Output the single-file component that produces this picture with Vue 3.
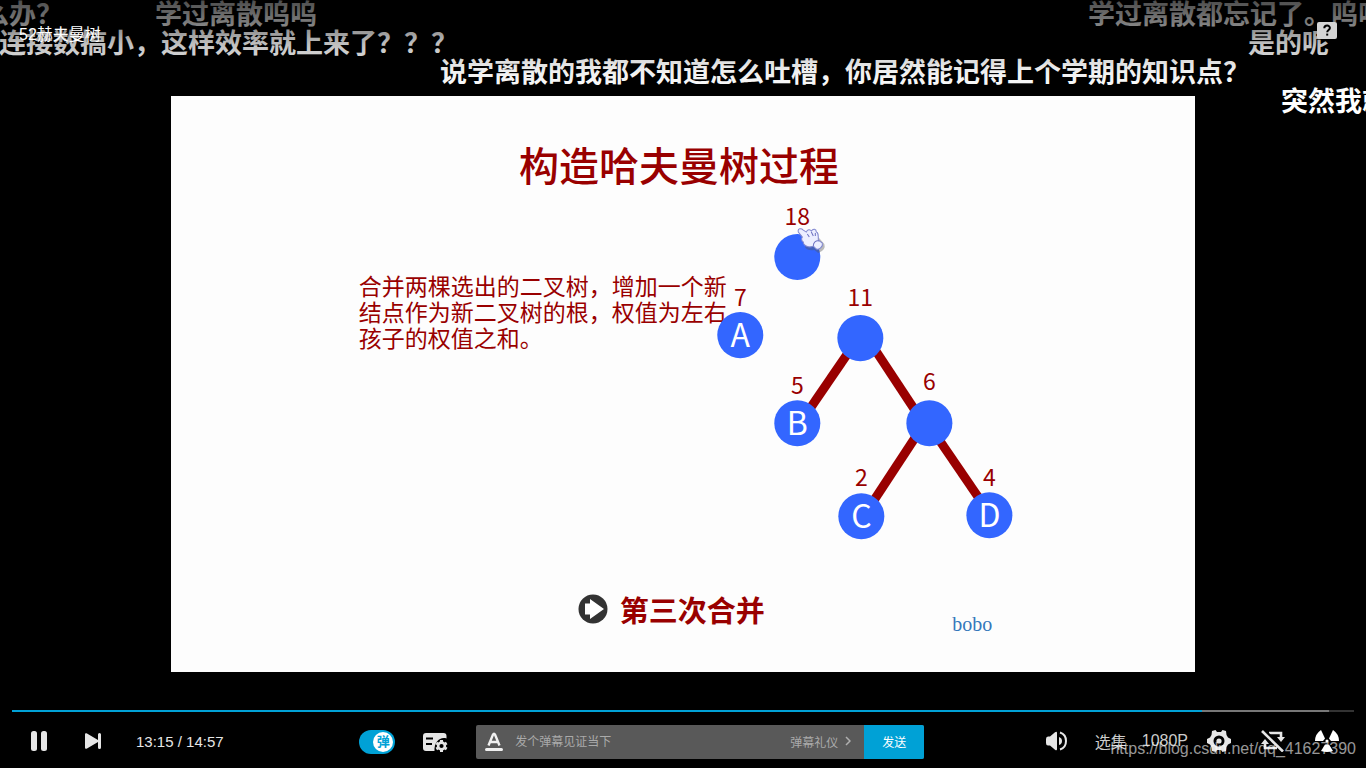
<template>
    <div class="player">
        <header class="top-bar">
            <h1>52赫夫曼树</h1>
            <button class="help" aria-label="帮助">
                <svg width="20" height="17" viewBox="0 0 20 17">
                    <rect width="20" height="17" rx="2" fill="#d4d4d4" />
                    <path
                        d="M7.3 6.2C7.3 2.7 13 2.8 12.9 6C12.8 8 10.2 8 10.2 10.2"
                        fill="none"
                        stroke="#000"
                        stroke-width="2"
                    />
                    <rect x="9.2" y="11.6" width="2" height="2" />
                </svg>
            </button>
        </header>

        <main class="slide">
            <h2>构造哈夫曼树过程</h2>
            <p class="explain">
                合并两棵选出的二叉树，增加一个新<br />
                结点作为新二叉树的根，权值为左右<br />
                孩子的权值之和。
            </p>
            <svg class="tree" viewBox="0 0 1024 576">
                <line
                    v-for="(edge, i) in edges"
                    :key="i"
                    :x1="edge[0]"
                    :y1="edge[1]"
                    :x2="edge[2]"
                    :y2="edge[3]"
                />
                <g v-for="node in nodes" :key="node.weight">
                    <circle :cx="node.x" :cy="node.y" r="23" />
                    <text class="weight" :x="node.x" :y="node.labelY">
                        {{ node.weight }}
                    </text>
                    <text class="name" :x="node.x" :y="node.y + 12">
                        {{ node.name }}
                    </text>
                </g>
                <!-- puntero con forma de mano -->
                <g transform="translate(626 132)">
                    <path
                        d="M7 14L19 6L26 14Q28 20 20 23L16 20Q10 21 7 18Z"
                        fill="#555"
                        opacity="0.4"
                        transform="translate(1 2)"
                    />
                    <path
                        d="M1 4C0 0 4 0 6 2L9 4C10 1 13 1 14 3C16 0 19 1 19 4C21 4 21 7 21 12L25 15C26 18 22 22 19 21L16 18C12 20 6 18 6 14C4 13 4 10 5 9Z"
                        fill="#eceeff"
                        stroke="#8087cf"
                        stroke-width="1"
                    />
                    <path
                        d="M10 6L12 9M14 4L16 8M18 5L18 8M16 18C16 14 19 12 22 13"
                        fill="none"
                        stroke="#6c70c0"
                        stroke-width="1"
                    />
                </g>
            </svg>
            <div class="step">
                <svg width="30" height="30" viewBox="0 0 30 30">
                    <circle cx="15" cy="15" r="14.5" fill="#333" />
                    <path d="M7 9.5H12V5L26 15L12 25V20.5H7Z" fill="#fff" />
                </svg>
                <strong>第三次合并</strong>
                <span class="author">bobo</span>
            </div>
        </main>

        <footer class="controls">
            <div class="progress">
                <div class="buffered" :style="{ width: buffered + '%' }"></div>
                <div class="played" :style="{ width: played + '%' }"></div>
            </div>
            <div class="row">
                <div class="left">
                    <button
                        class="icon"
                        aria-label="暂停"
                        @click="paused = !paused"
                    >
                        <svg width="18" height="22" viewBox="0 0 18 22">
                            <path v-if="paused" d="M2 1L17 11L2 21Z" />
                            <g v-else>
                                <rect x="1" y="1" width="6" height="20" rx="2.5" />
                                <rect x="11" y="1" width="6" height="20" rx="2.5" />
                            </g>
                        </svg>
                    </button>
                    <button class="icon" aria-label="下一个">
                        <svg width="16" height="16" viewBox="0 0 16 16">
                            <path
                                d="M0 1.5C0 0 1.2 0 2 .5L13 7V1.5Q13 0 14.5 0T16 1.5V14.5Q16 16 14.5 16T13 14.5V9L2 15.5C1.2 16 0 16 0 14.5Z"
                            />
                        </svg>
                    </button>
                    <span class="time">13:15 / 14:57</span>
                </div>

                <div class="center">
                    <label class="toggle">
                        <input v-model="showDanmaku" type="checkbox" aria-label="弹幕" />
                        <span>弹</span>
                    </label>
                    <button class="settings" aria-label="弹幕设置">
                        <svg width="25" height="20" viewBox="0 0 25 20">
                            <path
                                d="M3 1H20.5Q23.5 1 23.5 4V6.5C17 4.5 11 10 11.5 19H3Q0 19 0 16V4Q0 1 3 1Z"
                            />
                            <path
                                d="M3 6.5H10M3 12H9"
                                stroke="#000"
                                stroke-width="2"
                            />
                            <circle
                                cx="18.5"
                                cy="14"
                                r="3.4"
                                fill="none"
                                stroke="#e6e6e6"
                                stroke-width="2.6"
                            />
                            <path
                                d="M18.5 8V10M18.5 18V20M13.3 11L15 12M22 16L23.7 17M13.3 17L15 16M22 12L23.7 11"
                                stroke="#e6e6e6"
                                stroke-width="3"
                            />
                        </svg>
                    </button>
                    <form class="send-bar" @submit.prevent="message = ''">
                        <button type="button" class="font" aria-label="字体">
                            <svg width="18" height="20" viewBox="0 0 18 20">
                                <path
                                    d="M3.5 13.5L8 2.5Q9 .7 10 2.5L14.5 13.5M5.5 10H12.5"
                                    fill="none"
                                    stroke="#f0f0f0"
                                    stroke-width="2.4"
                                />
                                <rect y="16" width="18" height="3" rx="1.5" fill="#f0f0f0" />
                            </svg>
                        </button>
                        <input
                            v-model="message"
                            type="text"
                            aria-label="弹幕"
                            placeholder="发个弹幕见证当下"
                        />
                        <a href="#" class="etiquette">
                            弹幕礼仪
                            <svg width="6" height="10" viewBox="0 0 6 10">
                                <path
                                    d="M1 1L5 5L1 9"
                                    fill="none"
                                    stroke="#b0b0b0"
                                    stroke-width="1.5"
                                />
                            </svg>
                        </a>
                        <button type="submit" class="send">发送</button>
                    </form>
                </div>

                <div class="right">
                    <button class="icon" aria-label="音量">
                        <svg width="22" height="20" viewBox="0 0 22 20">
                            <path
                                d="M2 5.5H4L9 1.3Q11 0 11 2V18Q11 20 9 18.7L4 14.5H2Q0 14.5 0 12V8Q0 5.5 2 5.5Z"
                            />
                            <path d="M13 6Q16 7 16 10T13 14Z" />
                            <path
                                d="M14 1.5C22 4 22 16 14 18.5"
                                fill="none"
                                stroke="#e6e6e6"
                                stroke-width="2"
                            />
                        </svg>
                    </button>
                    <button class="text">选集</button>
                    <button class="text">1080P</button>
                    <button class="icon" aria-label="设置">
                        <svg width="24" height="22" viewBox="0 0 24 22">
                            <path
                                fill-rule="evenodd"
                                d="M5 1L8.5 0L10 2H14L15.5 0L19 1L19.5 5L21 7.5L24 9V13L21 14.5L19.5 17L19 21L15.5 22L14 20H10L8.5 22L5 21L4.5 17L3 14.5L0 13V9L3 7.5L4.5 5ZM12 5.5A5.5 5.5 0 1 0 12 16.5A5.5 5.5 0 1 0 12 5.5Z"
                            />
                            <circle cx="12" cy="11" r="2.6" />
                        </svg>
                    </button>
                    <button class="icon" aria-label="洗脑循环">
                        <svg width="24" height="22" viewBox="0 0 24 22">
                            <path
                                d="M8 3H20V8M16 18H4V12"
                                fill="none"
                                stroke="#e6e6e6"
                                stroke-width="2.6"
                            />
                            <path d="M16 7H24L20 12ZM0 14L4 9L8 14Z" />
                            <path d="M4 1L24 21" stroke="#000" stroke-width="3" />
                            <path d="M1 1L22 21.5" stroke="#e6e6e6" stroke-width="2.6" />
                        </svg>
                    </button>
                    <button class="icon" aria-label="宽屏">
                        <svg width="24" height="22" viewBox="0 0 24 22">
                            <g fill="#fff">
                                <path d="M0 11Q0 4 6 0L10 8.5L8 11Z" />
                                <path d="M24 11Q24 4 18 0L14 8.5L16 11Z" />
                                <path d="M10 14.5H14L18 21Q12 23 6 21Z" />
                                <circle cx="12" cy="11" r="1.6" />
                            </g>
                        </svg>
                    </button>
                </div>
            </div>
        </footer>

        <div v-show="showDanmaku" class="danmaku">
            <span
                v-for="item in danmaku"
                :key="item.text"
                :style="{ left: item.left + 'px', top: item.row * 29 + 'px' }"
                >{{ item.text }}</span
            >
        </div>
        <span class="watermark">https://blog.csdn.net/qq_41627390</span>
    </div>
</template>

<script setup>
import { ref } from "vue";

const paused = ref(false);
const showDanmaku = ref(true);
const message = ref("");
const played = ref(88.7);
const buffered = ref(98.1);

const nodes = [
    { weight: 18, name: "", x: 626, y: 161, labelY: 129 },
    { weight: 7, name: "A", x: 569, y: 239, labelY: 210 },
    { weight: 11, name: "", x: 689, y: 242, labelY: 210 },
    { weight: 5, name: "B", x: 626, y: 327, labelY: 298 },
    { weight: 6, name: "", x: 758, y: 327, labelY: 294 },
    { weight: 2, name: "C", x: 690, y: 420, labelY: 390 },
    { weight: 4, name: "D", x: 818, y: 419, labelY: 390 },
];

// x1, y1, x2, y2
const edges = [
    [678, 255, 639, 312],
    [704, 254, 743, 313],
    [746, 338, 702, 405],
    [766, 341, 809, 404],
];

const danmaku = [
    { text: "么办？", left: -18, row: 0 },
    { text: "学过离散呜呜", left: 155, row: 0 },
    { text: "学过离散都忘记了。呜呜", left: 1088, row: 0 },
    { text: "连接数搞小，这样效率就上来了？？？", left: -1, row: 1 },
    { text: "是的呢", left: 1248, row: 1 },
    {
        text: "说学离散的我都不知道怎么吐槽，你居然能记得上个学期的知识点？",
        left: 440,
        row: 2,
    },
    { text: "突然我就", left: 1281, row: 3 },
];
</script>

<style>
body {
    margin: 0;
    background: #000;
}
</style>

<style scoped>
.player {
    position: relative;
    display: grid;
    grid-template-rows: 1fr auto 1fr;
    min-height: 100vh;
    overflow: hidden;
    background: #000;
    color: #e6e6e6;
    font-family: "Liberation Sans", "Noto Sans CJK SC", sans-serif;
}

button {
    display: flex;
    align-items: center;
    justify-content: center;
    padding: 0;
    border: 0;
    background: none;
    color: inherit;
    font: inherit;
    cursor: pointer;
}

svg {
    display: block;
    fill: #e6e6e6;
}

.top-bar {
    position: relative;
    z-index: 3;
    display: flex;
    justify-content: space-between;
    align-items: flex-start;
    padding: 22px 29px 0 19px;
    h1 {
        margin: 0;
        font-size: 16px;
        line-height: 26px;
        font-weight: normal;
        color: #fff;
    }
    .help svg {
        fill: #000;
    }
}

.danmaku {
    position: absolute;
    inset: 0;
    z-index: 1;
    overflow: hidden;
    pointer-events: none;
    span {
        position: absolute;
        white-space: nowrap;
        font: bold 27px/25px "Noto Sans CJK SC", sans-serif;
        color: #fff;
    }
}
/* sombra superior que oscurece los comentarios */
.danmaku::after {
    content: "";
    position: absolute;
    inset: 0 0 auto;
    height: 96px;
    background: linear-gradient(
        rgba(0, 0, 0, 0.7),
        rgba(0, 0, 0, 0.5) 25%,
        rgba(0, 0, 0, 0.25) 46%,
        rgba(0, 0, 0, 0.06) 75%,
        transparent
    );
}

.slide {
    position: relative;
    display: flex;
    flex-direction: column;
    justify-self: center;
    width: 75%;
    aspect-ratio: 16 / 9;
    background: #fdfdfd;
    color: #900;
    font-family: "Noto Sans CJK SC", sans-serif;
    h2 {
        margin: 46px 8px 0 0;
        text-align: center;
        font-size: 40px;
        line-height: 44px;
        font-weight: 500;
    }
    .explain {
        margin: 86px 0 0 188px;
        font-size: 23px;
        line-height: 26px;
        white-space: nowrap;
    }
}

.tree {
    position: absolute;
    inset: 0;
    width: 100%;
    height: 100%;
    line {
        stroke: #900;
        stroke-width: 9;
    }
    circle {
        fill: #36f;
    }
    text {
        text-anchor: middle;
    }
    .weight {
        fill: #900;
        font-size: 23px;
    }
    .name {
        fill: #fff;
        font-size: 32px;
    }
}

.step {
    display: flex;
    align-items: center;
    margin-top: auto;
    padding: 0 203px 36px 407px;
    strong {
        margin-left: 12px;
        font-size: 29px;
        line-height: 42px;
    }
    .author {
        margin: 30px 0 0 auto;
        font: 20px/24px "Liberation Serif", serif;
        color: #3477bb;
    }
}

.controls {
    position: relative;
    z-index: 2;
    align-self: end;
    padding: 0 12px 9px;
}

.progress {
    position: relative;
    height: 2px;
    margin-bottom: 13px;
    background: #333;
    div {
        position: absolute;
        height: 100%;
    }
    .buffered {
        background: #777;
    }
    .played {
        background: #00a1d6;
    }
}

.row,
.left,
.center,
.right {
    display: flex;
    align-items: center;
}

.row {
    justify-content: space-between;
    height: 34px;
}

.left,
.right {
    padding-bottom: 2px;
}

.icon {
    width: 54px;
    height: 32px;
}

.left {
    min-width: 242px;
}

.time {
    margin-left: 16px;
    font-size: 15px;
    white-space: nowrap;
}

.center {
    gap: 28px;
}

.toggle {
    display: flex;
    justify-content: flex-end;
    align-items: center;
    box-sizing: border-box;
    width: 36px;
    height: 24px;
    padding: 2px;
    border-radius: 12px;
    background: #00a1d6;
    cursor: pointer;
    input {
        position: absolute;
        opacity: 0;
    }
    span {
        width: 20px;
        height: 20px;
        border-radius: 50%;
        background: #fff;
        color: #00a1d6;
        font-size: 13px;
        font-weight: bold;
        line-height: 20px;
        text-align: center;
    }
}

.send-bar {
    display: flex;
    align-items: center;
    width: 448px;
    height: 34px;
    border-radius: 2px;
    overflow: hidden;
    background: #595959;
    font-size: 12px;
    .font {
        width: 36px;
    }
    input {
        flex: 1;
        min-width: 0;
        padding: 0 3px;
        border: 0;
        outline: 0;
        background: none;
        color: #fff;
        font: inherit;
    }
    input::placeholder {
        color: #aaa;
    }
    .etiquette {
        display: flex;
        align-items: center;
        gap: 7px;
        margin-right: 13px;
        padding-bottom: 2px;
        color: #aaa;
        text-decoration: none;
    }
    .send {
        width: 60px;
        height: 34px;
        padding-bottom: 2px;
        background: #00a1d6;
        color: #fff;
    }
}

.text {
    padding: 0 4px 0 11px;
    font-size: 16px;
    color: #ccc;
}

.watermark {
    position: absolute;
    right: 10px;
    bottom: 7px;
    z-index: 4;
    font-size: 16px;
    line-height: 24px;
    color: rgba(255, 255, 255, 0.6);
    pointer-events: none;
}
</style>
